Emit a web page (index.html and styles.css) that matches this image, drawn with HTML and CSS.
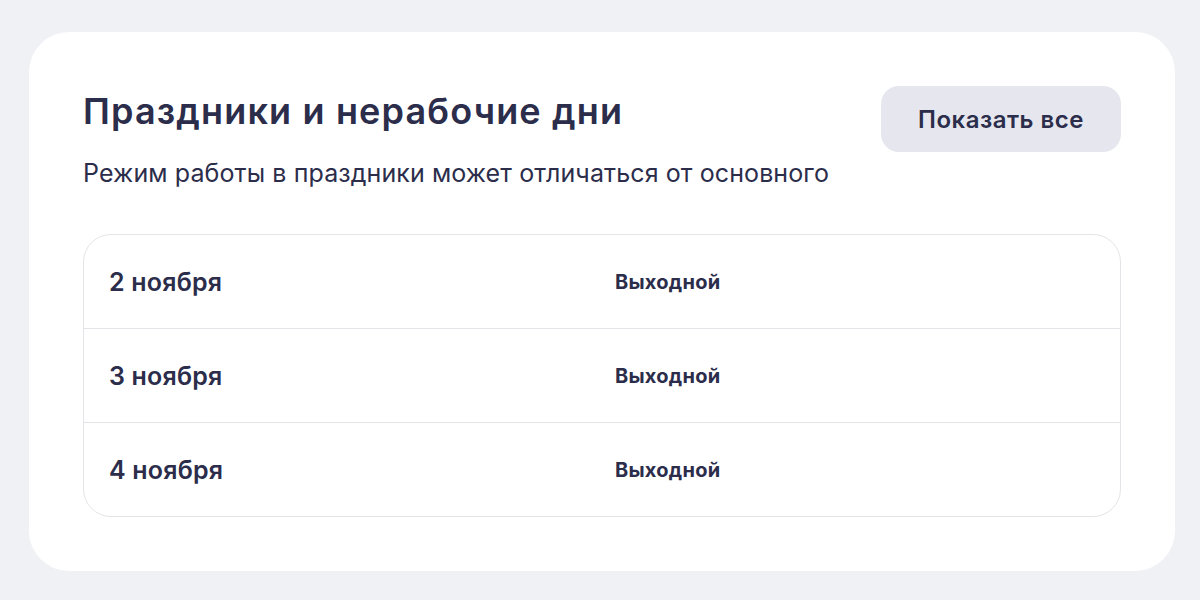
FILE: index.html
```html
<!DOCTYPE html>
<html lang="ru">
<head>
<meta charset="utf-8">
<link rel="stylesheet" href="styles.css">
</head>
<body>
<section class="card">
  <div class="head">
    <div class="head-text">
      <h2 class="title">Праздники и нерабочие дни</h2>
      <p class="subtitle">Режим работы в праздники может отличаться от основного</p>
    </div>
    <button class="btn">Показать все</button>
  </div>
  <div class="table">
    <div class="row"><span class="date">2 ноября</span><span class="status">Выходной</span></div>
    <div class="row"><span class="date">3 ноября</span><span class="status">Выходной</span></div>
    <div class="row"><span class="date">4 ноября</span><span class="status">Выходной</span></div>
  </div>
</section>
</body>
</html>
```
FILE: styles.css
```css
html, body { margin: 0; padding: 0; }
body {
  background: #f0f1f5;
  font-family: Inter, "Noto Sans", sans-serif;
  color: #2b2d4b;
  padding: 32px 25px 29px 29px;
  height: 600px;
  box-sizing: border-box;
}
.card {
  background: #ffffff;
  border-radius: 40px;
  padding: 54px 54px 54px 54px;
  height: 539px;
  box-sizing: border-box;
}
.head {
  display: flex;
  justify-content: space-between;
  align-items: flex-start;
}
.title {
  margin: 0;
  font-size: 36px;
  font-weight: 600;
  line-height: 50px;
  letter-spacing: 1.15px;
}
.subtitle {
  margin: 22px 0 0;
  font-size: 25px;
  font-weight: 400;
  line-height: 30px;
  letter-spacing: 0.1px;
}
.btn {
  width: 240px;
  height: 66px;
  border: 0;
  border-radius: 18px;
  background: #e6e7ee;
  color: #2b2d4b;
  font-family: inherit;
  font-size: 24px;
  font-weight: 600;
  letter-spacing: 0.5px;
  padding: 0;
}
.table {
  margin-top: 46px;
  border: 1px solid #e4e4e8;
  border-radius: 28px;
  height: 283px;
  box-sizing: border-box;
  display: flex;
  flex-direction: column;
}
.row {
  flex: 1;
  display: grid;
  grid-template-columns: 506px 1fr;
  align-items: center;
  padding-left: 25px;
}
.row + .row { border-top: 1px solid #e4e4e8; }
.date {
  font-size: 25px;
  font-weight: 600;
  letter-spacing: 0.2px;
}
.status {
  font-size: 20px;
  font-weight: 700;
  letter-spacing: 0.25px;
}
```
